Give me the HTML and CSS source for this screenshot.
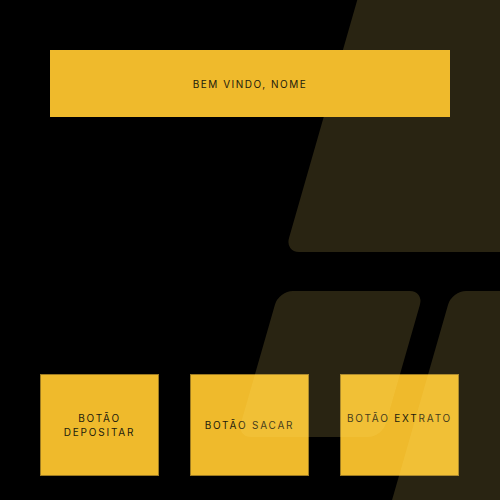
FILE: index.html
```html
<!DOCTYPE html>
<html lang="pt-BR">
<head>
<meta charset="utf-8">
<title>Banco</title>
<link rel="stylesheet" href="styles.css">
</head>
<body>
<main class="page">
  <div class="deco deco--big"></div>
  <header class="welcome">BEM VINDO, NOME</header>
  <section class="actions">
    <button class="action">BOTÃO DEPOSITAR</button>
    <button class="action">BOTÃO SACAR</button>
    <button class="action action--raised">BOTÃO EXTRATO</button>
  </section>
  <div class="deco deco--mid"></div>
  <div class="deco deco--right"></div>
</main>
</body>
</html>
```
FILE: styles.css
```css
html, body {
  margin: 0;
  padding: 0;
  background: #000;
}
.page {
  position: relative;
  width: 500px;
  height: 500px;
  overflow: hidden;
  box-sizing: border-box;
  padding: 50px 40px 0 40px;
  display: flex;
  flex-direction: column;
  font-family: "Inter", "Roboto", sans-serif;
}
.welcome {
  position: relative;
  z-index: 1;
  margin: 0 10px;
  height: 67px;
  background: #efba2c;
  color: #221b0c;
  font-size: 10px;
  letter-spacing: 1.5px;
  display: flex;
  align-items: center;
  justify-content: center;
}
.actions {
  margin-top: 257px;
  display: flex;
  gap: 31px;
}
.action {
  width: 119px;
  height: 102px;
  box-sizing: border-box;
  background: #efba2c;
  border: 1px solid #9c7a22;
  color: #221b0c;
  font-family: inherit;
  font-size: 10px;
  line-height: 14px;
  letter-spacing: 1.8px;
  padding: 0 8px;
  text-align: center;
}
.action--raised {
  padding: 0 0 14px 0;
}
.deco {
  position: absolute;
  background: rgba(255, 225, 110, 0.16);
  border-radius: 14px;
  transform-origin: 0 100%;
  transform: skewX(-16deg);
  pointer-events: none;
}
.deco--big {
  left: 285px;
  top: -40px;
  width: 260px;
  height: 292px;
}
.deco--mid {
  left: 237px;
  top: 291px;
  width: 145px;
  height: 146px;
}
.deco--right {
  left: 392px;
  top: 291px;
  width: 200px;
  height: 260px;
  transform-origin: 0 0;
  transform: translateX(60px) skewX(-16deg);
}
```
